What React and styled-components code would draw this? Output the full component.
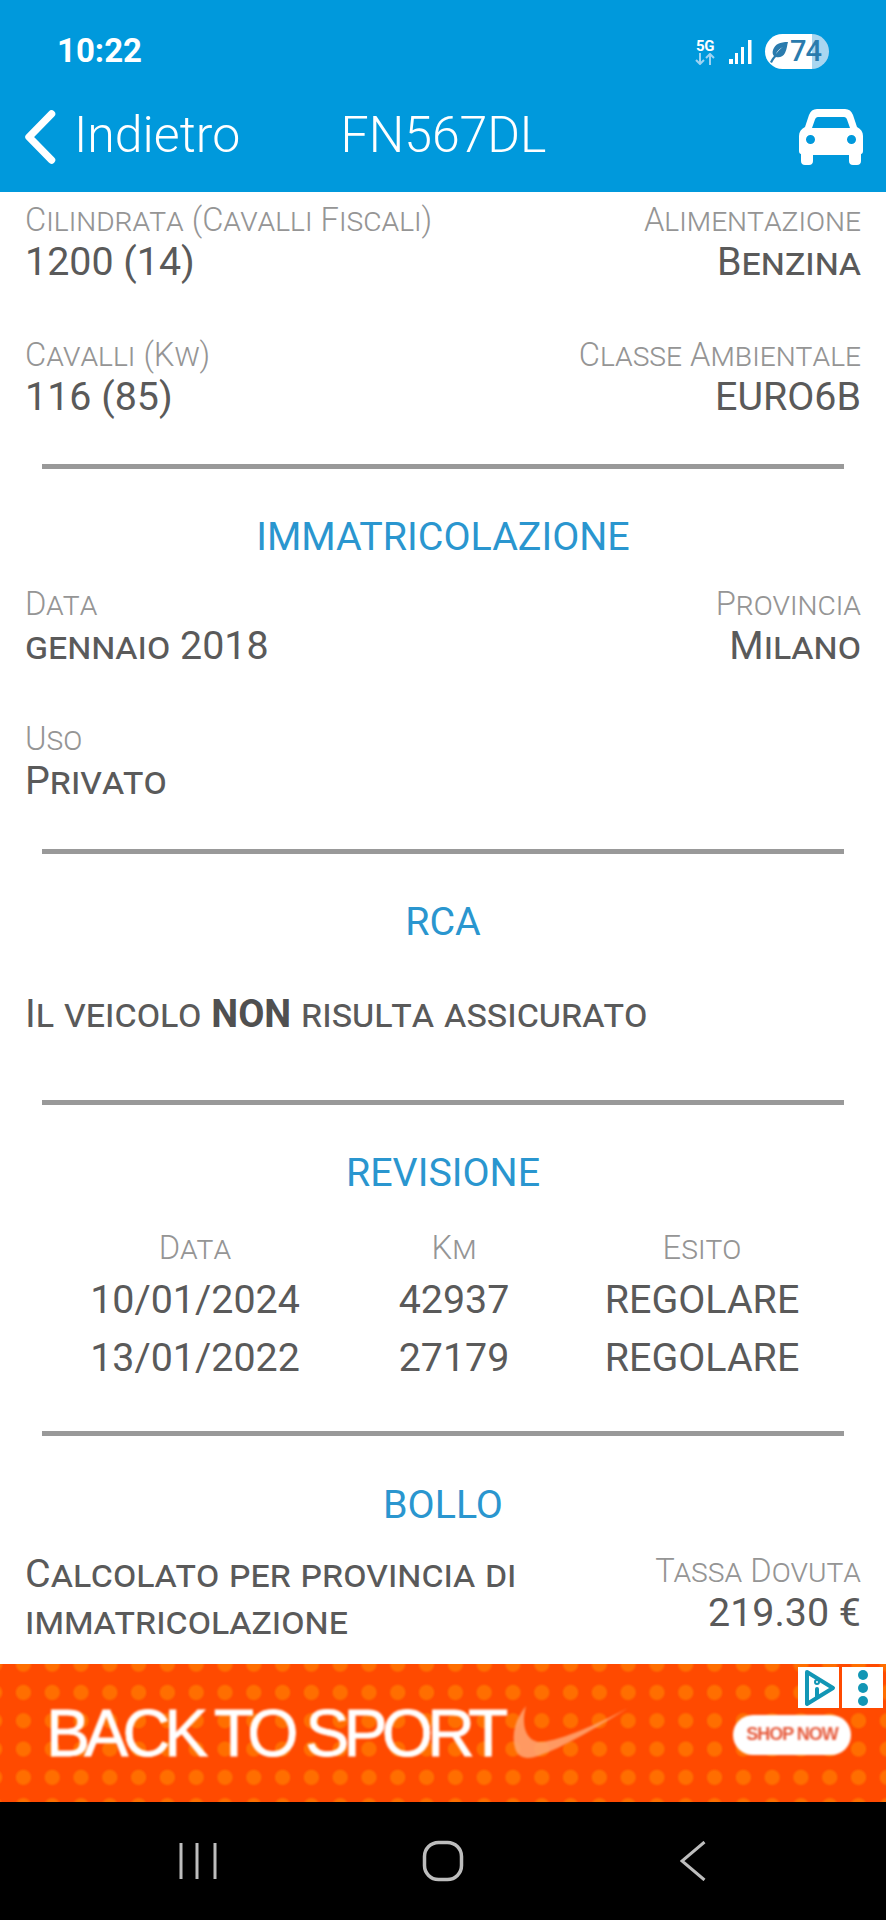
import React from "react";
import styled, { createGlobalStyle } from "styled-components";

const Global = createGlobalStyle`
  html, body { margin: 0; padding: 0; background: #fff; }
  body { font-family: Roboto, "Liberation Sans", sans-serif; }
`;
const Page = styled.div`
  width: 886px; height: 1920px; display: flex; flex-direction: column; overflow: hidden; background: #fff;
`;
const Header = styled.header`
  height: 192px; flex: none; background: #0099dc; color: #fff; box-sizing: border-box; display: flex; flex-direction: column;
`;
const StatusBar = styled.div`
  height: 84px; flex: none; display: flex; align-items: flex-end; justify-content: space-between; padding: 0 57px 15px 57px; box-sizing: border-box;
`;
const Clock = styled.span`
  font-size: 33px; font-weight: 700; line-height: 36px; letter-spacing: 0;
`;
const StatusIcons = styled.div`
  display: flex; align-items: center; gap: 12px; margin-bottom: 0;
`;
const NetBlock = styled.div`
  width: 22px; display: flex; flex-direction: column; align-items: center; margin-right: 1px;
`;
const NetLabel = styled.span`
  font-size: 15px; line-height: 14px; font-weight: 700; letter-spacing: -0.5px;
`;
const Battery = styled.div`
  width: 64px; height: 35px; border-radius: 18px; display: flex; align-items: center; gap: 1px; padding-left: 5px; box-sizing: border-box;
  background: linear-gradient(90deg, #fff 0, #fff 47px, #a9d6f0 47px, #a9d6f0 100%); color: #2a7bad; margin-left: 1px;
`;
const BatteryText = styled.span`
  font-size: 29px; line-height: 35px; font-weight: 500; letter-spacing: -1px;
`;
const NavBar = styled.div`
  flex: 1; display: grid; grid-template-columns: 1fr auto 1fr; align-items: center; padding: 0 23px 6px 24px;
`;
const Back = styled.div`
  display: flex; align-items: center; gap: 18px;
`;
const NavIcon = styled.span`
  display: flex; margin-top: 4px;
`;
const NavText = styled.span`
  font-size: 50px; line-height: 56px; font-weight: 300; color: #fff;
`;
const NavEnd = styled.div`
  display: flex; justify-content: flex-end;
`;
const Content = styled.main`
  flex: 1; display: flex; flex-direction: column; padding: 7px 25px 0; box-sizing: border-box; color: #5a5a5a; min-height: 0;
`;
const Row = styled.div`
  display: flex; justify-content: space-between; align-items: flex-start; margin-top: ${p => p.$mt || 0}px;
`;
const Field = styled.div`
  display: flex; flex-direction: column; text-align: ${p => (p.$right ? "right" : "left")};
`;
const Label = styled.span`
  font-size: 32.700px; line-height: 42px; color: #959595; font-variant: small-caps; font-weight: 300;
`;
const Value = styled.span`
  font-size: 39.400px; line-height: 42px; color: #5a5a5a; font-variant: small-caps;
`;
const Divider = styled.hr`
  border: 0; height: 5px; margin: ${p => p.$mt}px 17px 0; background: #999; flex: none;
`;
const Title = styled.h2`
  margin: ${p => p.$mt || 43}px 0 0; text-align: center; font-size: 39.400px; line-height: 50px; font-weight: 400; color: #2a96cf;
`;
const Sentence = styled.p`
  margin: 46px 0 0; font-size: 39.600px; line-height: 42px; color: #5a5a5a; font-variant: small-caps;
`;
const Strong = styled.b`
  font-weight: 700; font-variant: normal; font-size: 38px; color: #505050;
`;
const Table = styled.div`
  display: grid; grid-template-columns: 340px 178px 318px; margin-top: 29px; text-align: center;
`;
const HeadCell = styled.span`
  font-size: 32.700px; line-height: 42px; color: #959595; font-variant: small-caps; font-weight: 300; margin-bottom: 2px;
`;
const Cell = styled.span`
  font-size: 39.400px; line-height: 57.500px; color: #5a5a5a;
`;
const Note = styled.p`
  margin: 0; width: 560px; font-size: 39.400px; line-height: 47px; color: #5a5a5a; font-variant: small-caps;
`;
const Ad = styled.div`
  height: 138px; flex: none; position: relative; overflow: hidden; display: flex; align-items: center; justify-content: space-between; padding: 0 35px 0 46px; box-sizing: border-box;
  background-color: #ff4a00;
  background-image: radial-gradient(circle, #ff6e00 0 6px, rgba(255,110,0,0) 9px);
  background-size: 28.800px 28.300px; background-position: 9px -14px;
`;
const AdLeft = styled.div`
  display: flex; align-items: center; gap: 6px; filter: blur(0.8px); margin-top: -1px;
`;
const AdHeadline = styled.span`
  font-family: "Liberation Sans", sans-serif; font-size: 66px; line-height: 70px; color: #fff; letter-spacing: -5.800px; white-space: nowrap; -webkit-text-stroke: 0.8px #fff;
`;
const ShopNow = styled.span`
  width: 118px; height: 40px; border-radius: 20px; background: #fff; color: #e65a3c; display: flex; align-items: center; justify-content: center; font-family: "Liberation Sans", sans-serif; font-size: 18px; font-weight: 700; letter-spacing: -1px; filter: blur(0.8px); margin-top: 3px; white-space: nowrap;
`;
const AdBadges = styled.div`
  position: absolute; top: 3px; right: 3px; display: flex; gap: 3px;
`;
const AdBadge = styled.div`
  width: ${p => p.$w}px; height: 41px; background: #fff; display: flex; align-items: center; justify-content: center;
`;
const BottomNav = styled.nav`
  height: 118px; flex: none; background: #000; padding-top: 38px; box-sizing: border-box;
  display: grid; grid-template-columns: 1fr 1fr 1fr; justify-items: center;
`;
const NavSlot = styled.div`
  display: flex; padding: ${p => p.$p || "0"};
`;

const Chevron = () => (
  <svg width="32" height="54" viewBox="0 0 32 54"><path d="M27.5 4 L5 27 L27.5 50" fill="none" stroke="#fff" strokeWidth="7.5" strokeLinecap="round" strokeLinejoin="round" /></svg>
);
const Car = () => (
  <svg width="64" height="56" viewBox="0 0 64 56">
    <path fill="#fff" fillRule="evenodd" d="M18 0H46C50 0 52.500 2 54 6L58 18C62 20 64 23 64 27V42C64 44 63 45 62 45V52C62 54.500 60.500 56 58 56H54C51.500 56 50 54.500 50 52V46H14V52C14 54.500 12.500 56 10 56H6C3.500 56 2 54.500 2 52V45C1 45 0 44 0 42V27C0 23 2 20 6 18L10 6C11.500 2 14 0 18 0ZM19 8C17.500 8 16.500 9 16 10.500L13 19H51L48 10.500C47.500 9 46.500 8 45 8ZM11.500 26A4.500 4.500 0 1 0 11.510 35A4.500 4.500 0 1 0 11.500 26ZM52.500 26A4.500 4.500 0 1 0 52.510 35A4.500 4.500 0 1 0 52.500 26Z" />
  </svg>
);
const Arrows = () => (
  <svg width="20" height="12" viewBox="0 0 20 12" fill="none" stroke="#9fd3f2" strokeWidth="2"><path d="M5 0V11M1 7L5 11L9 7" /><path d="M15 12V1M11 5L15 1L19 5" /></svg>
);
const Signal = () => (
  <svg width="23" height="24" viewBox="0 0 23 24" fill="#fff"><rect x="0" y="19" width="4" height="5" /><rect x="6" y="13" width="3" height="11" /><rect x="12" y="7" width="3" height="17" /><rect x="19" y="0" width="3.500" height="24" /></svg>
);
const Leaf = () => (
  <svg width="19" height="22" viewBox="0 0 19 22" fill="#2a7bad"><path d="M18 1C10 1 5 3 3 9C2 12 3 14 4 15C2 17 1 19 0 21L2 22C3 20 4 18 6 16C9 17 13 16 15 12C17 8 17 4 18 1ZM13 6C10 8 8 10 6 13C7 10 9 8 13 6Z" /></svg>
);
const AdPlay = () => (
  <svg width="34" height="38" viewBox="0 0 34 38" fill="none" stroke="#1296b5" strokeWidth="4" strokeLinejoin="round" strokeLinecap="round"><path d="M5 3L31 19L5 35Z" /><path d="M15 20V28" /><circle cx="15" cy="13" r="1" /></svg>
);
const AdDots = () => (
  <svg width="12" height="38" viewBox="0 0 12 38" fill="#1296b5"><circle cx="6" cy="6" r="5" /><circle cx="6" cy="19" r="5" /><circle cx="6" cy="32" r="5" /></svg>
);
const Swoosh = () => (
  <svg width="124" height="54" viewBox="0 0 116 54"><path d="M14 0C4 12 -1 28 3 42C6 52 14 54 26 50C50 42 84 22 116 2C86 18 50 34 30 36C16 37 8 22 14 0Z" fill="#ffa773" opacity="0.85" /></svg>
);
const Bars = () => (
  <svg width="38" height="38" viewBox="0 0 38 38" stroke="#bdbdbd" strokeWidth="3"><path d="M2 1V37M18 1V37M36 1V37" /></svg>
);
const Home = () => (
  <svg width="42" height="42" viewBox="0 0 42 42"><rect x="2.500" y="2.500" width="37" height="37" rx="14" fill="none" stroke="#bdbdbd" strokeWidth="3.500" /></svg>
);
const BackTri = () => (
  <svg width="26" height="40" viewBox="0 0 26 40"><path d="M24.500 1L2 20L24.500 39" fill="none" stroke="#bdbdbd" strokeWidth="3" /></svg>
);

export default function App() {
  return (
    <Page>
      <Global />
      <Header>
        <StatusBar>
          <Clock>10:22</Clock>
          <StatusIcons>
            <NetBlock>
              <NetLabel>5G</NetLabel>
              <Arrows />
            </NetBlock>
            <Signal />
            <Battery>
              <Leaf />
              <BatteryText>74</BatteryText>
            </Battery>
          </StatusIcons>
        </StatusBar>
        <NavBar>
          <Back>
            <NavIcon><Chevron /></NavIcon>
            <NavText>Indietro</NavText>
          </Back>
          <NavText>FN567DL</NavText>
          <NavEnd><NavIcon><Car /></NavIcon></NavEnd>
        </NavBar>
      </Header>
      <Content>
        <Row>
          <Field><Label>Cilindrata (Cavalli Fiscali)</Label><Value>1200 (14)</Value></Field>
          <Field $right><Label>Alimentazione</Label><Value>Benzina</Value></Field>
        </Row>
        <Row $mt={51}>
          <Field><Label>Cavalli (Kw)</Label><Value>116 (85)</Value></Field>
          <Field $right><Label>Classe Ambientale</Label><Value>EURO6B</Value></Field>
        </Row>
        <Divider $mt={46} />
        <Title>IMMATRICOLAZIONE</Title>
        <Row $mt={21}>
          <Field><Label>Data</Label><Value>gennaio 2018</Value></Field>
          <Field $right><Label>Provincia</Label><Value>Milano</Value></Field>
        </Row>
        <Row $mt={51}>
          <Field><Label>Uso</Label><Value>Privato</Value></Field>
        </Row>
        <Divider $mt={47} />
        <Title>RCA</Title>
        <Sentence>Il veicolo <Strong>NON</Strong> risulta assicurato</Sentence>
        <Divider $mt={65} />
        <Title>REVISIONE</Title>
        <Table>
          <HeadCell>Data</HeadCell><HeadCell>Km</HeadCell><HeadCell>Esito</HeadCell>
          <Cell>10/01/2024</Cell><Cell>42937</Cell><Cell>REGOLARE</Cell>
          <Cell>13/01/2022</Cell><Cell>27179</Cell><Cell>REGOLARE</Cell>
        </Table>
        <Divider $mt={45} />
        <Title $mt={44}>BOLLO</Title>
        <Row $mt={20}>
          <Note>Calcolato per provincia di immatricolazione</Note>
          <Field $right><Label>Tassa Dovuta</Label><Value>219.30 €</Value></Field>
        </Row>
      </Content>
      <Ad>
        <AdLeft>
          <AdHeadline>BACK TO SPORT</AdHeadline>
          <Swoosh />
        </AdLeft>
        <ShopNow>SHOP NOW</ShopNow>
        <AdBadges>
          <AdBadge $w={41}><AdPlay /></AdBadge>
          <AdBadge $w={41}><AdDots /></AdBadge>
        </AdBadges>
      </Ad>
      <BottomNav>
        <NavSlot $p="2px 0 0 100px"><Bars /></NavSlot>
        <NavSlot><Home /></NavSlot>
        <NavSlot $p="1px 90px 0 0"><BackTri /></NavSlot>
      </BottomNav>
    </Page>
  );
}
